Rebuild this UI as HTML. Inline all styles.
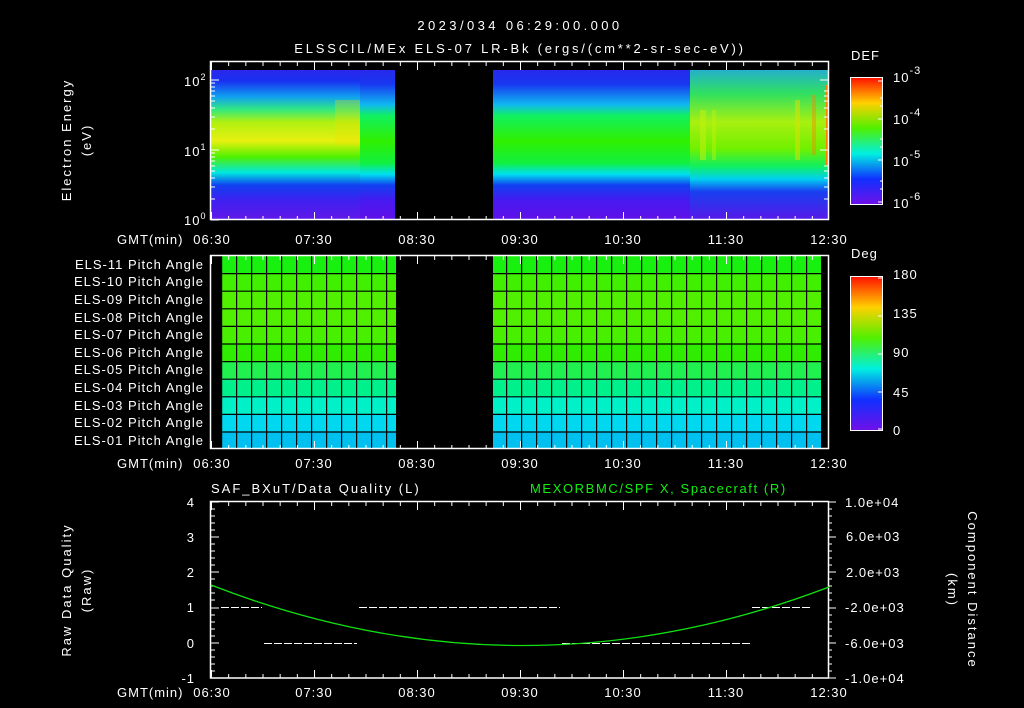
<!DOCTYPE html>
<html><head><meta charset="utf-8"><style>
html,body{margin:0;padding:0;background:#000;}
svg{display:block}
text{font-family:"Liberation Sans",sans-serif;fill:#fff;font-size:13px;letter-spacing:1px;}
</style></head><body>
<svg width="1024" height="708" viewBox="0 0 1024 708" xmlns="http://www.w3.org/2000/svg">
<defs>
<linearGradient id="specA" x1="0" y1="62" x2="0" y2="220" gradientUnits="userSpaceOnUse">
<stop offset="0" stop-color="#3a20e8"/><stop offset="0.12" stop-color="#1830f0"/>
<stop offset="0.22" stop-color="#10a0f0"/><stop offset="0.3" stop-color="#30e880"/>
<stop offset="0.38" stop-color="#b0f010"/><stop offset="0.5" stop-color="#e8f010"/>
<stop offset="0.6" stop-color="#50f000"/><stop offset="0.7" stop-color="#00e8e0"/>
<stop offset="0.78" stop-color="#1040f0"/><stop offset="0.88" stop-color="#4020f0"/>
<stop offset="1" stop-color="#6018e8"/></linearGradient>
<linearGradient id="specB" x1="0" y1="62" x2="0" y2="220" gradientUnits="userSpaceOnUse">
<stop offset="0" stop-color="#3020e8"/><stop offset="0.14" stop-color="#1838f0"/>
<stop offset="0.27" stop-color="#10b8f0"/><stop offset="0.34" stop-color="#10f060"/>
<stop offset="0.5" stop-color="#30f000"/><stop offset="0.64" stop-color="#10f040"/>
<stop offset="0.71" stop-color="#00e0f0"/><stop offset="0.78" stop-color="#1040f0"/>
<stop offset="0.88" stop-color="#4818f0"/><stop offset="1" stop-color="#6010e8"/></linearGradient>
<linearGradient id="specC" x1="0" y1="62" x2="0" y2="220" gradientUnits="userSpaceOnUse">
<stop offset="0" stop-color="#20a0f0"/><stop offset="0.2" stop-color="#30e060"/>
<stop offset="0.38" stop-color="#a8f010"/><stop offset="0.55" stop-color="#70f000"/>
<stop offset="0.66" stop-color="#10f060"/><stop offset="0.74" stop-color="#00d0f0"/>
<stop offset="0.82" stop-color="#1840f0"/><stop offset="1" stop-color="#5818e8"/></linearGradient>
<linearGradient id="cb1" x1="0" y1="0" x2="0" y2="1">
<stop offset="0" stop-color="#ff1000"/><stop offset="0.2" stop-color="#ffd000"/>
<stop offset="0.4" stop-color="#50f000"/><stop offset="0.6" stop-color="#00f0e0"/>
<stop offset="0.8" stop-color="#1030ff"/><stop offset="1" stop-color="#7010e8"/></linearGradient>
<pattern id="minT" width="17.1667" height="10" patternUnits="userSpaceOnUse" x="211" y="0">
<rect x="0" y="0" width="1" height="10" fill="#fff"/></pattern>
<pattern id="vgrid" width="15" height="10" patternUnits="userSpaceOnUse" x="221" y="0">
<rect x="0" y="0" width="1.2" height="10" fill="#000"/></pattern>
</defs>

<text x="520" y="30" text-anchor="middle" font-size="17" style="letter-spacing:3.4px">2023/034 06:29:00.000</text>
<text x="520" y="53" text-anchor="middle" font-size="17" style="letter-spacing:2.8px">ELSSCIL/MEx ELS-07 LR-Bk  (ergs/(cm**2-sr-sec-eV))</text>

<rect x="211" y="70" width="149" height="150" fill="url(#specA)"/>
<rect x="360" y="70" width="35" height="150" fill="url(#specB)"/>
<rect x="493" y="70" width="197" height="150" fill="url(#specB)"/>
<rect x="690" y="70" width="138" height="150" fill="url(#specC)"/>
<rect x="700" y="110" width="6" height="50" fill="#c8f010" opacity="0.5"/>
<rect x="712" y="110" width="4" height="50" fill="#c8f010" opacity="0.4"/>
<rect x="795" y="100" width="5" height="60" fill="#e0e000" opacity="0.5"/>
<rect x="812" y="95" width="4" height="60" fill="#ff8000" opacity="0.4"/>
<rect x="826" y="85" width="2" height="80" fill="#ff8000"/>
<rect x="335" y="100" width="25" height="45" fill="#f0e000" opacity="0.3"/>
<rect x="210.5" y="61.5" width="618" height="158" fill="none" stroke="#fff" stroke-width="1.5"/>
<rect x="211" y="62" width="617" height="4" fill="url(#minT)"/>
<rect x="211" y="216" width="617" height="4" fill="url(#minT)"/>
<g stroke="#fff" stroke-width="1">
<path d="M211.5 62v8M314.5 62v8M417.5 62v8M520.5 62v8M623.5 62v8M726.5 62v8M828.5 62v8M211.5 220v-8M314.5 220v-8M417.5 220v-8M520.5 220v-8M623.5 220v-8M726.5 220v-8"/>
<path d="M211 80h8M211 150h8M211 220h8M211 129h4M211 117h4M211 108h4M211 101h4M211 96h4M211 91h4M211 87h4M211 83h4M211 199h4M211 187h4M211 178h4M211 171h4M211 166h4M211 161h4M211 157h4M211 153h4"/>
<path d="M828 80h-8M828 150h-8M828 129h-4M828 117h-4M828 108h-4M828 101h-4M828 96h-4M828 91h-4M828 199h-4M828 187h-4M828 178h-4M828 171h-4M828 166h-4"/>
</g>
<text x="184" y="86" font-size="13">10<tspan dy="-6" font-size="9">2</tspan></text>
<text x="184" y="156" font-size="13">10<tspan dy="-6" font-size="9">1</tspan></text>
<text x="184" y="225" font-size="13">10<tspan dy="-6" font-size="9">0</tspan></text>
<text transform="translate(71,140) rotate(-90)" text-anchor="middle" font-size="14" style="letter-spacing:2px">Electron Energy</text>
<text transform="translate(91,140) rotate(-90)" text-anchor="middle" font-size="14" style="letter-spacing:2px">(eV)</text>
<text x="117" y="244" font-size="13">GMT(min)</text>
<g font-size="13" text-anchor="middle">
<text x="212" y="244">06:30</text><text x="314" y="244">07:30</text><text x="417" y="244">08:30</text>
<text x="520" y="244">09:30</text><text x="623" y="244">10:30</text><text x="726" y="244">11:30</text><text x="829" y="244">12:30</text></g>
<text x="851" y="60" font-size="16">DEF</text>
<rect x="850.5" y="77.5" width="32" height="127" fill="url(#cb1)" stroke="#fff"/>
<g stroke="#fff"><path d="M883 81h-5M883 98h-3M883 106h-3M883 119h-5M883 139h-3M883 147h-3M883 160h-5M883 181h-3M883 189h-3M883 202h-5"/></g>
<text x="893" y="82" font-size="16">10<tspan dy="-8" font-size="11">-3</tspan></text>
<text x="893" y="124" font-size="16">10<tspan dy="-8" font-size="11">-4</tspan></text>
<text x="893" y="166" font-size="16">10<tspan dy="-8" font-size="11">-5</tspan></text>
<text x="893" y="208" font-size="16">10<tspan dy="-8" font-size="11">-6</tspan></text>

<g>
<rect x="221" y="256" width="600" height="17.6" fill="#18f010"/>
<rect x="221" y="273.6" width="600" height="17.6" fill="#40f000"/>
<rect x="221" y="291.2" width="600" height="17.6" fill="#50f000"/>
<rect x="221" y="308.8" width="600" height="17.6" fill="#50f000"/>
<rect x="221" y="326.4" width="600" height="17.6" fill="#48f000"/>
<rect x="221" y="344" width="600" height="17.6" fill="#30ec00"/>
<rect x="221" y="361.6" width="600" height="17.6" fill="#20f050"/>
<rect x="221" y="379.2" width="600" height="17.6" fill="#00f08c"/>
<rect x="221" y="396.8" width="600" height="17.6" fill="#00f0c8"/>
<rect x="221" y="414.4" width="600" height="17.6" fill="#00d8f0"/>
<rect x="221" y="432" width="600" height="17" fill="#00c0f0"/>
<rect x="221" y="256" width="601" height="193" fill="url(#vgrid)"/>
<path d="M221 273.6h600M221 291.2h600M221 308.8h600M221 326.4h600M221 344h600M221 361.6h600M221 379.2h600M221 396.8h600M221 414.4h600M221 432h600" stroke="#000" stroke-width="1.2"/>
<rect x="396" y="256" width="97" height="193" fill="#000"/>
</g>
<rect x="210.5" y="255.5" width="618" height="193" fill="none" stroke="#fff" stroke-width="1.5"/>
<rect x="211" y="256" width="617" height="4" fill="url(#minT)"/>
<rect x="211" y="445" width="617" height="4" fill="url(#minT)"/>
<path d="M211.5 256v8M314.5 256v8M417.5 256v8M520.5 256v8M623.5 256v8M726.5 256v8M211.5 449v-8M314.5 449v-8M417.5 449v-8M520.5 449v-8M623.5 449v-8M726.5 449v-8" stroke="#fff"/>
<g font-size="13" text-anchor="end" style="letter-spacing:1.1px">
<text x="204" y="269">ELS-11 Pitch Angle</text><text x="204" y="286">ELS-10 Pitch Angle</text>
<text x="204" y="304">ELS-09 Pitch Angle</text><text x="204" y="322">ELS-08 Pitch Angle</text>
<text x="204" y="339">ELS-07 Pitch Angle</text><text x="204" y="357">ELS-06 Pitch Angle</text>
<text x="204" y="374">ELS-05 Pitch Angle</text><text x="204" y="392">ELS-04 Pitch Angle</text>
<text x="204" y="410">ELS-03 Pitch Angle</text><text x="204" y="427">ELS-02 Pitch Angle</text>
<text x="204" y="445">ELS-01 Pitch Angle</text></g>
<text x="117" y="468" font-size="13">GMT(min)</text>
<g font-size="13" text-anchor="middle">
<text x="212" y="468">06:30</text><text x="314" y="468">07:30</text><text x="417" y="468">08:30</text>
<text x="520" y="468">09:30</text><text x="623" y="468">10:30</text><text x="726" y="468">11:30</text><text x="829" y="468">12:30</text></g>
<text x="851" y="258" font-size="16">Deg</text>
<rect x="850.5" y="276.5" width="32" height="154" fill="url(#cb1)" stroke="#fff"/>
<g stroke="#fff"><path d="M883 278h-5M883 316h-5M883 354h-5M883 392h-5M883 429h-5"/></g>
<g font-size="16"><text x="893" y="279">180</text><text x="893" y="318">135</text><text x="893" y="357">90</text><text x="893" y="397">45</text><text x="893" y="435">0</text></g>

<text x="211" y="493" font-size="15" style="letter-spacing:2px">SAF_BXuT/Data Quality (L)</text>
<text x="530" y="493" font-size="15" style="fill:#10f010;letter-spacing:1.6px">MEXORBMC/SPF X, Spacecraft (R)</text>
<rect x="210.5" y="501.5" width="618" height="176.5" fill="none" stroke="#fff" stroke-width="1.5"/>
<rect x="211" y="502" width="617" height="4" fill="url(#minT)"/>
<rect x="211" y="674" width="617" height="4" fill="url(#minT)"/>
<path d="M211.5 502v8M314.5 502v8M417.5 502v8M520.5 502v8M623.5 502v8M726.5 502v8M211.5 678v-8M314.5 678v-8M417.5 678v-8M520.5 678v-8M623.5 678v-8M726.5 678v-8" stroke="#fff"/>
<path d="M211 502h8M211 537h8M211 572h8M211 608h8M211 643h8M211 678h8M211 509h4M211 516h4M211 523h4M211 530h4M211 544h4M211 551h4M211 558h4M211 565h4M211 579h4M211 586h4M211 593h4M211 600h4M211 615h4M211 622h4M211 629h4M211 636h4M211 650h4M211 657h4M211 664h4M211 671h4" stroke="#fff"/>
<path d="M828 502h8M828 537h8M828 572h8M828 608h8M828 643h8M828 678h8M828 509h4M828 516h4M828 523h4M828 530h4M828 544h4M828 551h4M828 558h4M828 565h4M828 579h4M828 586h4M828 593h4M828 600h4M828 615h4M828 622h4M828 629h4M828 636h4M828 650h4M828 657h4M828 664h4M828 671h4" stroke="#fff"/>
<path d="M221 607.5h41M359 607.5h201M752 607.5h58M264 643.5h93M562 643.5h190" stroke="#fff" stroke-dasharray="8 2"/>
<path d="M211 585 Q520 705 829 587" fill="none" stroke="#10e010" stroke-width="1.3"/>
<g font-size="13" text-anchor="end">
<text x="195" y="507">4</text><text x="195" y="542">3</text><text x="195" y="577">2</text>
<text x="195" y="612">1</text><text x="195" y="648">0</text><text x="195" y="683">-1</text></g>
<g font-size="13" style="letter-spacing:0.8px">
<text x="845" y="507">1.0e+04</text><text x="846" y="541">6.0e+03</text><text x="846" y="577">2.0e+03</text>
<text x="845" y="612">-2.0e+03</text><text x="845" y="648">-6.0e+03</text><text x="845" y="683">-1.0e+04</text></g>
<text transform="translate(71,590) rotate(-90)" text-anchor="middle" font-size="14" style="letter-spacing:2px">Raw Data Quality</text>
<text transform="translate(91,590) rotate(-90)" text-anchor="middle" font-size="14" style="letter-spacing:2px">(Raw)</text>
<text transform="translate(968,590) rotate(90)" text-anchor="middle" font-size="14" style="letter-spacing:2px">Component Distance</text>
<text transform="translate(948,590) rotate(90)" text-anchor="middle" font-size="14" style="letter-spacing:2px">(km)</text>
<text x="117" y="697" font-size="13">GMT(min)</text>
<g font-size="13" text-anchor="middle">
<text x="212" y="697">06:30</text><text x="314" y="697">07:30</text><text x="417" y="697">08:30</text>
<text x="520" y="697">09:30</text><text x="623" y="697">10:30</text><text x="726" y="697">11:30</text><text x="829" y="697">12:30</text></g>
</svg>
</body></html>
